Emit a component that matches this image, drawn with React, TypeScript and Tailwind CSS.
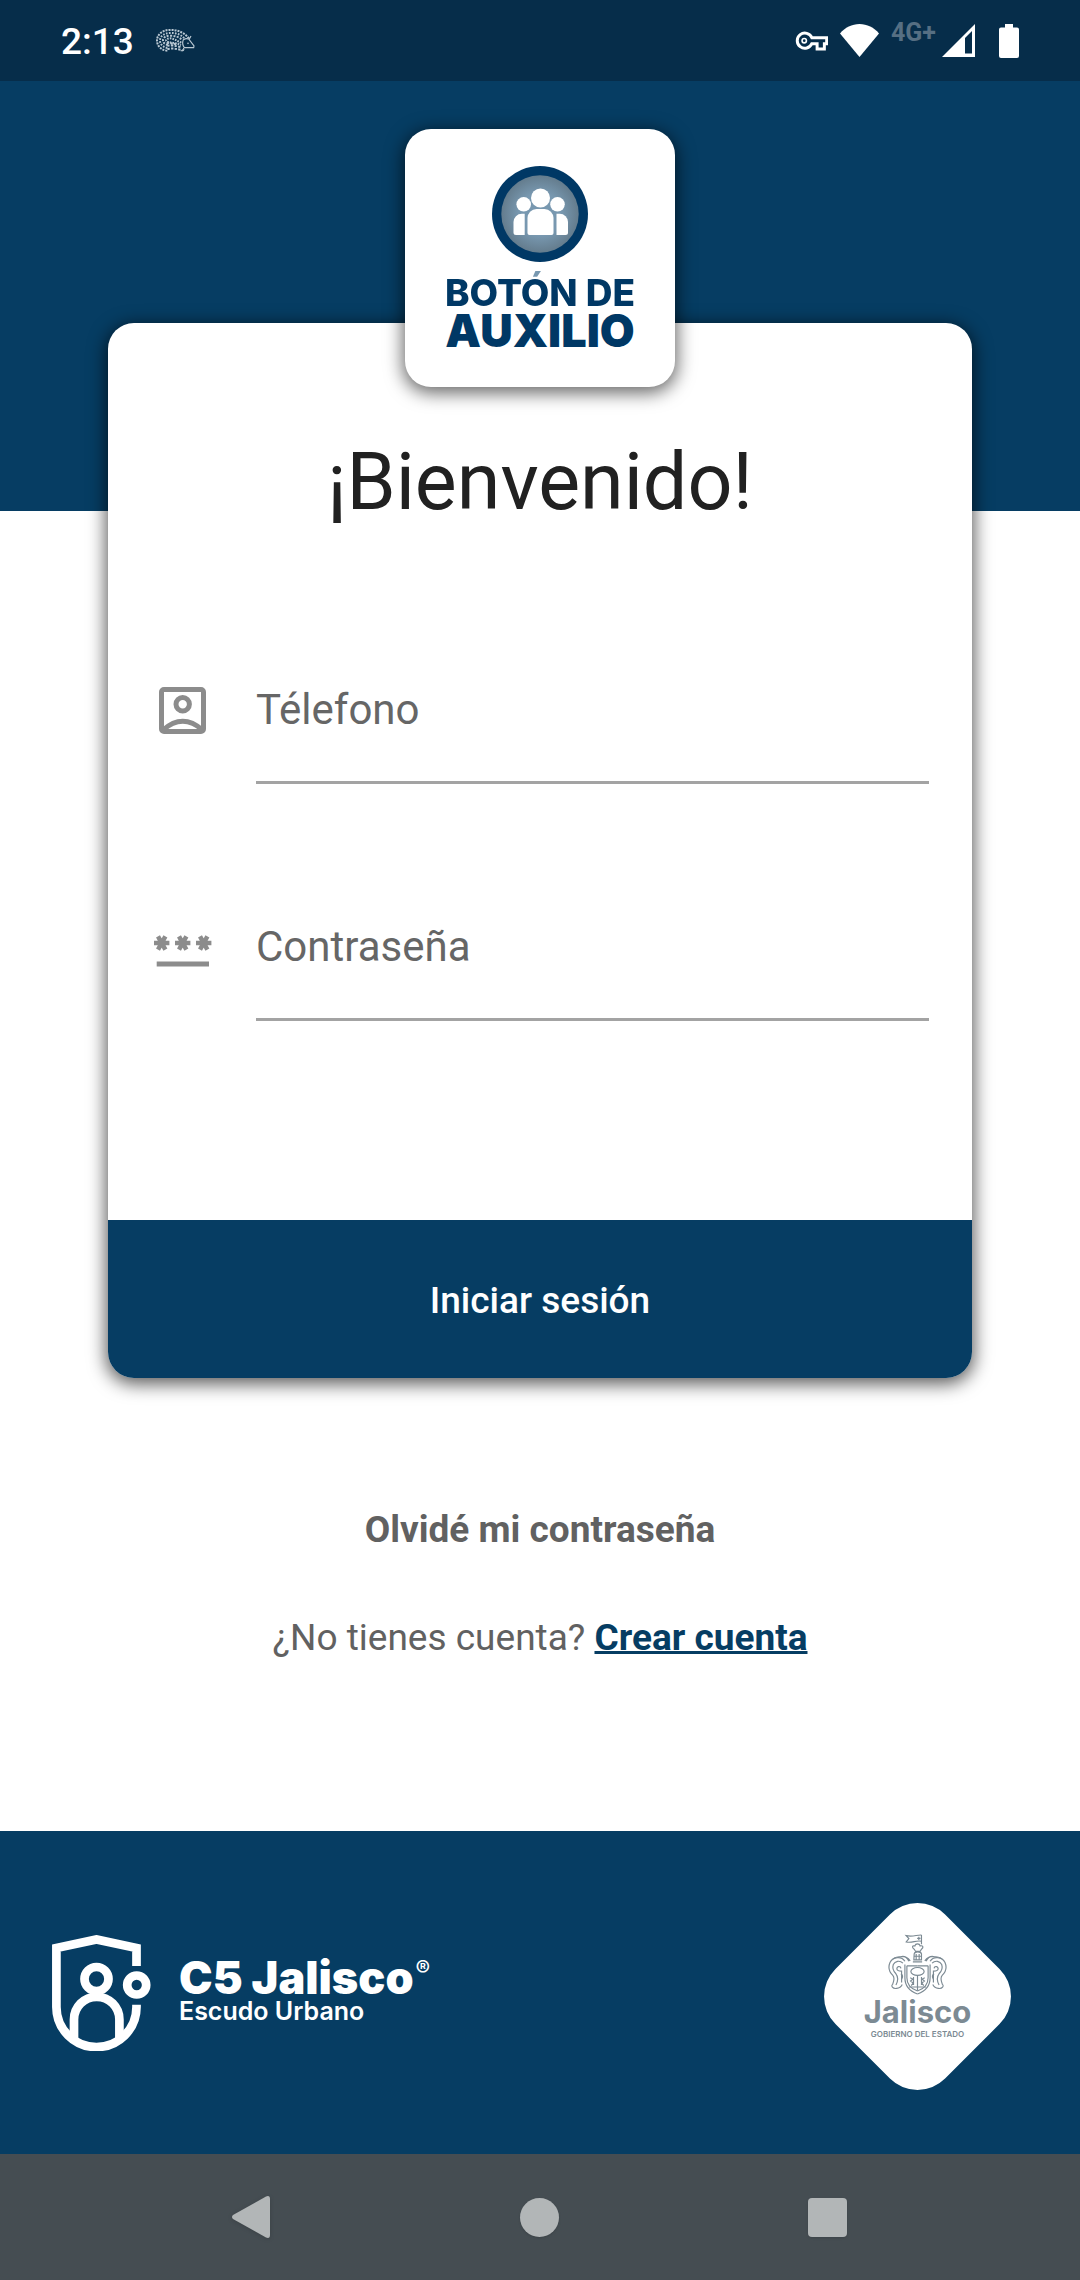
import type { ReactNode } from "react";

function HedgehogIcon() {
  return (
    <svg viewBox="0 0 117 69" className="h-[23px] w-[39px]" fill="none" stroke="#b9c8d3">
      <path d="M34 65C14 64 2 48 3 33 4 16 20 3 40 3c26-2 48 10 60 27" strokeWidth="6" strokeDasharray="6 3" />
      <path d="M34 57C20 54 11 44 12 33c1-12 14-21 30-21 20-1 36 6 44 18" strokeWidth="6" strokeDasharray="5 4" />
      <path d="M36 48C26 46 20 40 21 33c1-8 10-13 22-13 14 0 26 4 34 12" strokeWidth="6" strokeDasharray="6 4" />
      <path d="M76 41C64 36 50 28 42 28c-8 0-14 4-11 8 6 6 26 4 44 12" strokeWidth="6" strokeDasharray="5 3" />
      <path d="M34 50c12-2 26 0 42 5M34 60c16-3 30-1 46 4M32 42c10 0 20 1 30 4" strokeWidth="6" strokeDasharray="7 4" />
      <path d="M82 32c-3 8-2 18 3 24h28l1-5-16-21c-5-2-11-1-16 2zM82 57c4 6 0 9-8 8M100 30l5-9" strokeWidth="3.500" />
      <circle cx="96" cy="43" r="2.500" fill="#b9c8d3" stroke="none" />
    </svg>
  );
}

function KeyIcon() {
  return (
    <svg viewBox="0 0 100 60" className="h-5 w-[33px]" fill="none" stroke="#fff">
      <path d="M51 20A23 23 0 1 0 51 38H67V54H89V38H96V20Z" strokeWidth="9" />
      <circle cx="28" cy="29" r="9" fill="#fff" stroke="none" />
      <circle cx="28" cy="29" r="4" fill="#062d4a" stroke="none" />
    </svg>
  );
}

function WifiIcon() {
  return (
    <svg viewBox="0 0 39 33" className="h-[33px] w-[39px]" fill="#fff">
      <path d="M19.500 33L0 9.500C5 3.500 12 0 19.500 0S34 3.500 39 9.500Z" />
    </svg>
  );
}

function SignalIcon() {
  return (
    <svg viewBox="0 0 33 33" className="h-[33px] w-[33px]">
      <path d="M0 33L33 0V33Z" fill="#fff" />
      <path d="M23 14L30 7V29.500H23Z" fill="#062d4a" />
    </svg>
  );
}

function BatteryIcon() {
  return (
    <svg viewBox="0 0 20 34" className="h-[34px] w-5" fill="#fff">
      <path d="M6 0h8v3.500h4a2 2 0 0 1 2 2V32a2 2 0 0 1-2 2H2a2 2 0 0 1-2-2V5.500a2 2 0 0 1 2-2h4Z" />
    </svg>
  );
}

function PeopleBadge() {
  return (
    <svg viewBox="0 0 96 96" className="h-24 w-24">
      <defs>
        <radialGradient id="badge">
          <stop offset="0.55" stopColor="#7898b0" />
          <stop offset="1" stopColor="#647c8d" />
        </radialGradient>
      </defs>
      <circle cx="48" cy="48" r="48" fill="#003865" />
      <circle cx="48" cy="48" r="38.700" fill="url(#badge)" />
      <g fill="#fff">
        <circle cx="48.500" cy="32" r="9.500" />
        <circle cx="31.700" cy="38.300" r="7.300" />
        <circle cx="65.500" cy="38.300" r="7.300" />
        <path d="M35.500 67V52a9 9 0 0 1 9-9h8a9 9 0 0 1 9 9V67a2 2 0 0 1-2 2h-22a2 2 0 0 1-2-2Z" />
        <path d="M32.700 47.700V69H24a2.500 2.500 0 0 1-2.500-2.500V56a8.300 8.300 0 0 1 8.300-8.300Z" />
        <path d="M64.500 47.700V69h9a2.500 2.500 0 0 0 2.500-2.500V56a8.300 8.300 0 0 0-8.300-8.300Z" />
      </g>
    </svg>
  );
}

function AccountIcon() {
  return (
    <svg viewBox="0 0 58 52" className="h-[52px] w-[58px]" fill="none" stroke="#8c8c8c" strokeWidth="5">
      <rect x="7.500" y="4.500" width="42" height="42" rx="2.500" />
      <circle cx="28.700" cy="19.200" r="6.700" />
      <path d="M9 45Q28.700 27.500 48.500 45" />
    </svg>
  );
}

function PasswordIcon() {
  return (
    <svg viewBox="0 0 58 52" className="h-[52px] w-[58px]" fill="none" stroke="#8c8c8c" strokeWidth="4.500">
      {[7.7, 28.7, 49.7].map((x) => (
        <path key={x} transform={`translate(${x} 21)`} d="M-7.700 0H7.700M-3.700-6.700L3.700 6.700M3.700-6.700L-3.700 6.700" />
      ))}
      <path d="M2.700 42H55" strokeWidth="5" />
    </svg>
  );
}

function ShieldLogo() {
  return (
    <svg viewBox="0 0 99 116" className="h-[116px] w-[99px] shrink-0" fill="none" stroke="#fff" strokeWidth="8.700">
      <path d="M84.500 31V13L44.500 4.400 4.400 13V72a40 40 0 0 0 80.100 0V69.700" />
      <circle cx="44.500" cy="44" r="12" />
      <path d="M22 104V84.500a22.700 22.700 0 0 1 45.400 0V104" />
      <circle cx="84.700" cy="50" r="9.500" />
    </svg>
  );
}

function CrestHalf() {
  return (
    <>
      <path d="M50 82C40 66 14 68 5 86c-6 14-2 28 8 38 8 8 4 18 0 28-6 4 0 14 12 12 8-1 14-6 17-12" />
      <path d="M44 88C34 78 20 82 15 92c-4 12 0 20 8 28 8 10 6 22 0 34M38 104c-2-10-14-6-12 2 1 6 8 6 14 6v34" />
      <path d="M14 76c8-8 18-8 28-8 8 0 16 6 20 14M36 69c12-4 22 2 30 12M50 92v40c0 26 18 42 38 49" />
      <path d="M56 96h32M56 96v36c0 20 14 34 32 40M38 120c6 4 6 10 2 16" />
      <path d="M66 132l8 4-7 6 8 6-6 8M76 130v24" />
    </>
  );
}

function Crest() {
  return (
    <svg viewBox="0 0 176 184" className="h-[61px] w-[59px]" fill="none" stroke="#7c8a93" strokeWidth="3.500">
      <CrestHalf />
      <g transform="matrix(-1 0 0 1 176 0)">
        <CrestHalf />
      </g>
      <path d="M100 3v28M100 3C86 2 74 10 54 5l8 9-8 10c18 4 30-6 46-2M92 8v10M87 13h10" />
      <path d="M78 46c-8-6-6-12 2-10 2-8 14-8 16 0 8-2 12 4 4 10l-4 6H82ZM78 60c2-8 20-8 22 0v18H77ZM77 67h23M84 60v18M93 60v18M74 84h28" />
      <ellipse cx="88" cy="113" rx="20" ry="12" />
      <path d="M88 125v46M62 160h52" />
    </svg>
  );
}

type FieldProps = { id: string; label: string; type: string; icon: ReactNode };

function Field({ id, label, type, icon }: FieldProps) {
  return (
    <div className="flex items-start gap-11 pr-[43px] pl-[46px]">
      <label htmlFor={id} aria-label={label} className="shrink-0">
        {icon}
      </label>
      <input
        id={id}
        type={type}
        placeholder={label}
        aria-label={label}
        className="min-w-0 flex-1 border-b-[3px] border-[#a3a3a3] bg-transparent pb-[47px] text-[42px] leading-[49px] text-[#212121] outline-none placeholder:text-[#666666] placeholder:opacity-100"
      />
    </div>
  );
}

export default function App() {
  return (
    <div className="flex min-h-screen flex-col bg-white font-['Roboto',sans-serif]">
      <header className="flex h-[81px] items-center justify-between bg-[#062d4a] px-[61px] text-white">
        <div className="flex items-center gap-[22px]">
          <span className="pt-0.5 text-[37px] leading-[44px] font-medium">2:13</span>
          <HedgehogIcon />
        </div>
        <div className="flex items-center">
          <KeyIcon />
          <span className="ml-3">
            <WifiIcon />
          </span>
          <span className="ml-3 pb-4 text-[25px] leading-7 font-bold text-[#566f83]">4G+</span>
          <span className="ml-1.5">
            <SignalIcon />
          </span>
          <span className="ml-6">
            <BatteryIcon />
          </span>
        </div>
      </header>

      <div className="h-[430px] bg-[#063d63]" />

      <main className="flex flex-col">
        <form
          onSubmit={(event) => event.preventDefault()}
          className="mx-[10%] -mt-[188px] flex flex-col rounded-[26px] bg-white shadow-[0_4px_18px_2px_rgba(0,0,0,0.65)]"
        >
          <div className="-mt-[194px] flex h-[258px] w-[270px] flex-col items-center self-center rounded-[26px] bg-white pt-[37px] font-['Inter',sans-serif] text-[#003865] shadow-[0_4px_18px_2px_rgba(0,0,0,0.6)]">
            <PeopleBadge />
            <span className="mt-2 bg-linear-to-b from-[#7898b0] from-[8px] to-[#003865] to-[8px] bg-clip-text text-[37px] leading-[45px] font-extrabold whitespace-nowrap text-transparent">
              BOTÓN DE
            </span>
            <span className="text-[45px] leading-[32px] font-black whitespace-nowrap">AUXILIO</span>
          </div>
          <h1 className="mt-12 text-center text-[79px] leading-[94px] text-[#212121]">¡Bienvenido!</h1>
          <div className="mt-[156px] flex flex-col gap-[138px]">
            <Field id="telefono" label="Télefono" type="tel" icon={<AccountIcon />} />
            <Field id="contrasena" label="Contraseña" type="password" icon={<PasswordIcon />} />
          </div>
          <button
            type="submit"
            className="mt-[199px] h-[158px] rounded-b-[26px] bg-[#063d63] pt-1 text-[37px] leading-[42px] font-medium text-white"
          >
            Iniciar sesión
          </button>
        </form>
        <a href="#recuperar" className="mt-[131px] self-center text-[37px] leading-[42px] font-bold text-[#616161]">
          Olvidé mi contraseña
        </a>
        <p className="mt-[66px] mb-12 text-center text-[37px] leading-[42px] text-[#616161]">
          ¿No tienes cuenta?{" "}
          <a
            href="#registro"
            className="font-bold text-[#063d63] underline decoration-[3px] underline-offset-1 [text-decoration-skip-ink:none]"
          >
            Crear cuenta
          </a>
        </p>
      </main>

      <footer className="mt-auto flex h-[323px] items-center justify-between bg-[#063d63] pr-[69px] pl-[52px] font-['Inter',sans-serif]">
        <div className="flex items-center gap-7 text-white">
          <ShieldLogo />
          <div className="flex flex-col pb-1">
            <span className="flex items-start gap-0.5 text-[45px] leading-[40px] font-black whitespace-nowrap">
              C5 Jalisco
              <span className="text-[22px] leading-5 font-semibold">®</span>
            </span>
            <span className="text-[25px] leading-[26px] font-semibold whitespace-nowrap">Escudo Urbano</span>
          </div>
        </div>
        <div className="relative mt-2 flex h-[187px] w-[187px] flex-col items-center pt-[31px] text-[#7c8a93]">
          <div className="absolute inset-4 rotate-45 rounded-[39px] bg-white" />
          <div className="relative flex flex-col items-center">
            <Crest />
            <span className="text-[31px] leading-[34px] font-bold">Jalisco</span>
            <span className="text-[8px] leading-[10px] font-semibold whitespace-nowrap">GOBIERNO DEL ESTADO</span>
          </div>
        </div>
      </footer>

      <nav className="flex h-[126px] items-center justify-center gap-[249px] bg-[#454d52] pr-0.5">
        <button type="button" aria-label="Atrás">
          <svg viewBox="0 0 39 44" className="h-11 w-[39px] drop-shadow-sm" fill="#b2b6b7">
            <path d="M1 20Q-1 22 1 24L34 42.500Q38 44 38 40V4Q38 0 34 1.500Z" />
          </svg>
        </button>
        <button type="button" aria-label="Inicio">
          <div className="h-[39px] w-[39px] rounded-full bg-[#b2b6b7] shadow-sm" />
        </button>
        <button type="button" aria-label="Recientes">
          <div className="h-[39px] w-[39px] rounded-[4px] bg-[#b2b6b7] shadow-sm" />
        </button>
      </nav>
    </div>
  );
}
